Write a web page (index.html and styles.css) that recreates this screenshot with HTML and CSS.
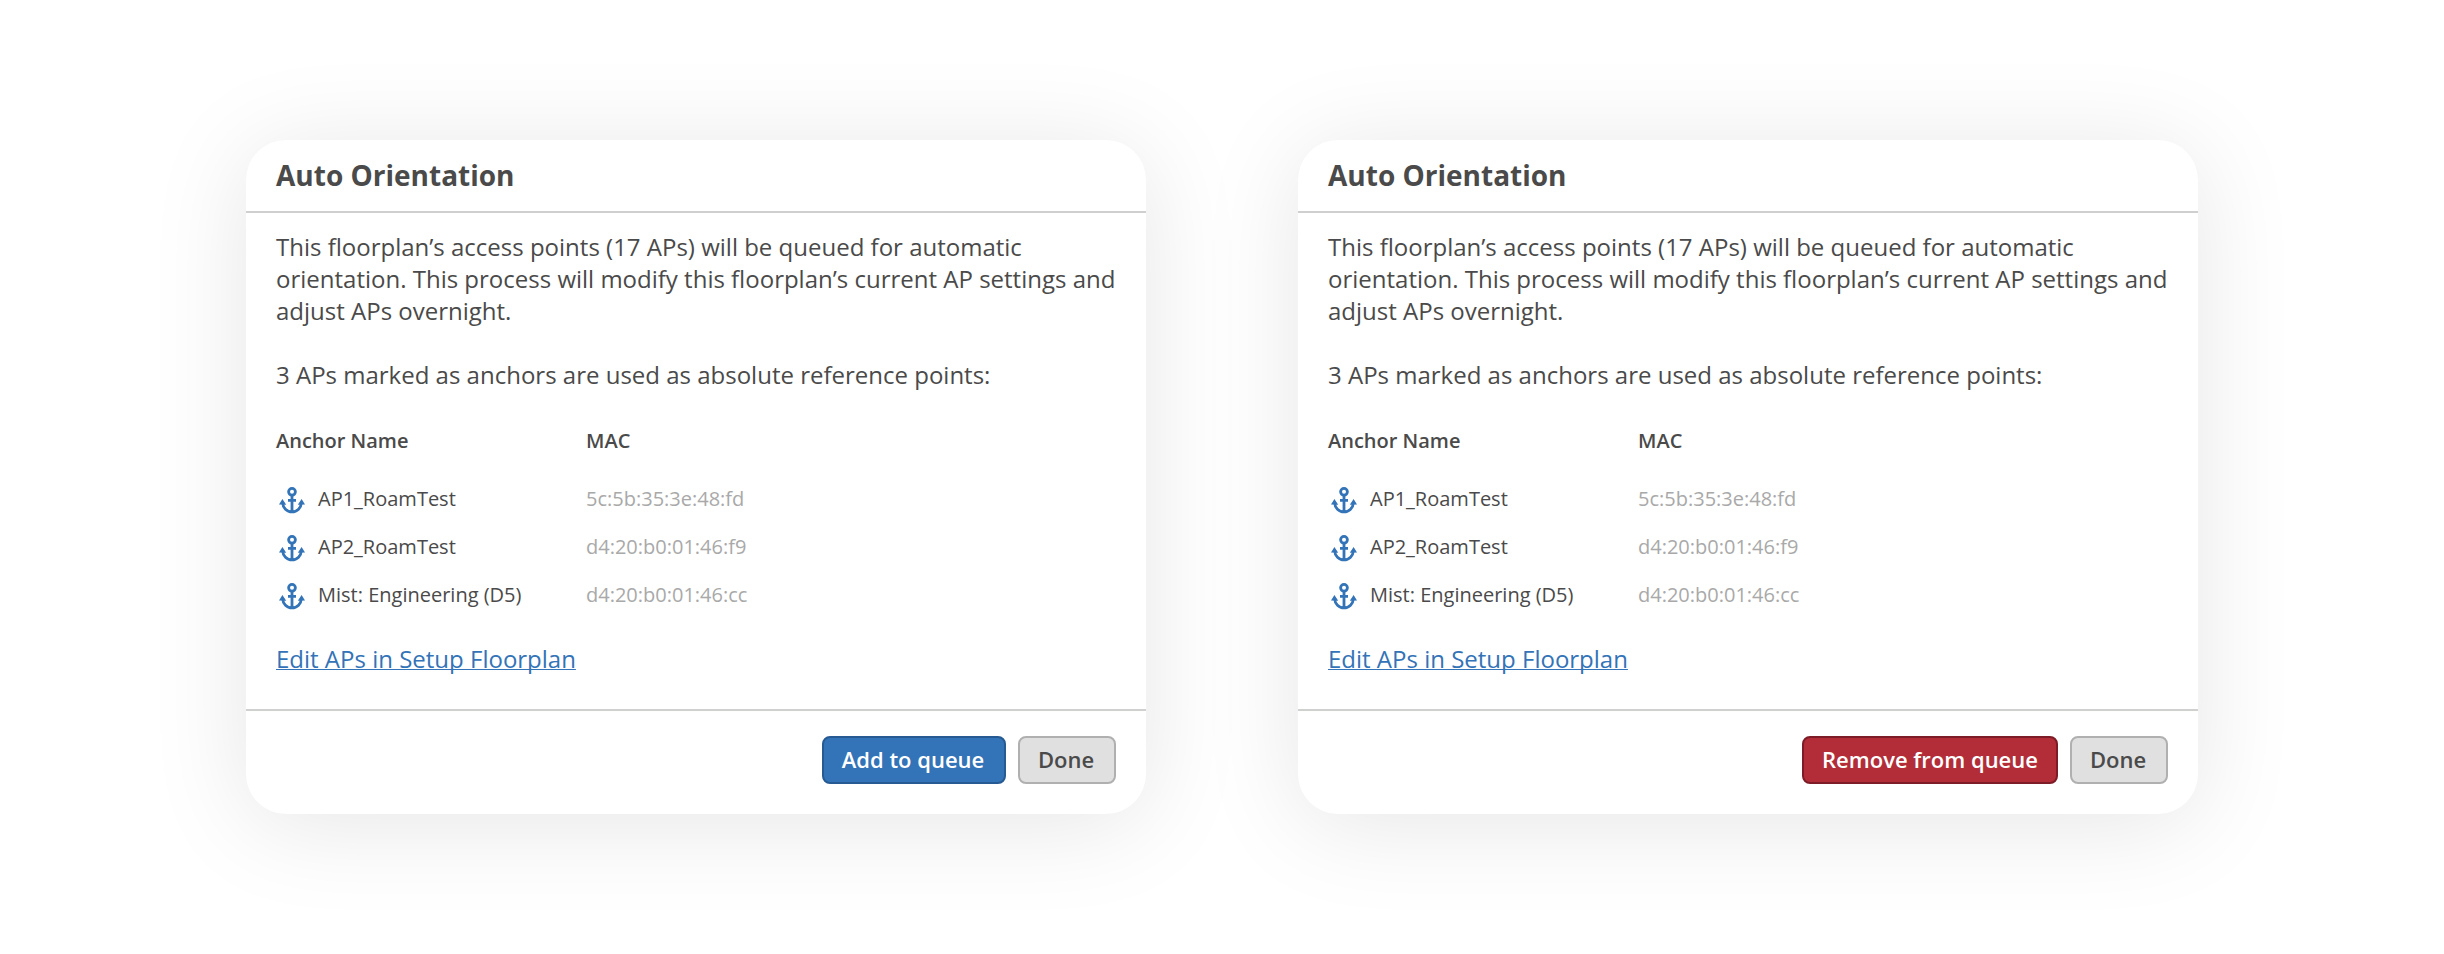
FILE: index.html
```html
<!DOCTYPE html>
<html lang="en">
<head>
<meta charset="utf-8">
<title>Auto Orientation</title>
<link rel="stylesheet" href="styles.css">
</head>
<body>
<svg class="sprite" aria-hidden="true">
  <symbol id="anchor" viewBox="0 0 26 27">
    <circle cx="13" cy="4.8" r="3.4" fill="none" stroke="currentColor" stroke-width="2.8"/>
    <path d="M13 8v17M9 13.300h8M3.600 15.500c.3 5.300 4.200 9.400 9.400 9.400s9.100-4.100 9.400-9.400" fill="none" stroke="currentColor" stroke-width="2.800"/>
    <path d="M3.400 12L7.200 17.800L0 17.400ZM22.600 12L26 17.400L18.800 17.800Z" fill="currentColor"/>
  </symbol>
</svg>
<main class="stage">
  <section class="dialog">
    <header class="dialog-header"><h2 class="title">Auto Orientation</h2></header>
    <div class="dialog-body">
      <p class="text">This floorplan’s access points (17 APs) will be queued for automatic<br>orientation. This process will modify this floorplan’s current AP settings and<br>adjust APs overnight.</p>
      <p class="text">3 APs marked as anchors are used as absolute reference points:</p>
      <div class="table">
        <div class="row head"><span>Anchor Name</span><span>MAC</span></div>
        <div class="row"><span class="name"><svg class="icon"><use href="#anchor"/></svg>AP1_RoamTest</span><span class="mac">5c:5b:35:3e:48:fd</span></div>
        <div class="row"><span class="name"><svg class="icon"><use href="#anchor"/></svg>AP2_RoamTest</span><span class="mac">d4:20:b0:01:46:f9</span></div>
        <div class="row"><span class="name"><svg class="icon"><use href="#anchor"/></svg>Mist: Engineering (D5)</span><span class="mac">d4:20:b0:01:46:cc</span></div>
      </div>
      <a class="link" href="#">Edit APs in Setup Floorplan</a>
    </div>
    <footer class="dialog-footer"><button class="btn primary">Add to queue</button><button class="btn done">Done</button></footer>
  </section>
  <section class="dialog">
    <header class="dialog-header"><h2 class="title">Auto Orientation</h2></header>
    <div class="dialog-body">
      <p class="text">This floorplan’s access points (17 APs) will be queued for automatic<br>orientation. This process will modify this floorplan’s current AP settings and<br>adjust APs overnight.</p>
      <p class="text">3 APs marked as anchors are used as absolute reference points:</p>
      <div class="table">
        <div class="row head"><span>Anchor Name</span><span>MAC</span></div>
        <div class="row"><span class="name"><svg class="icon"><use href="#anchor"/></svg>AP1_RoamTest</span><span class="mac">5c:5b:35:3e:48:fd</span></div>
        <div class="row"><span class="name"><svg class="icon"><use href="#anchor"/></svg>AP2_RoamTest</span><span class="mac">d4:20:b0:01:46:f9</span></div>
        <div class="row"><span class="name"><svg class="icon"><use href="#anchor"/></svg>Mist: Engineering (D5)</span><span class="mac">d4:20:b0:01:46:cc</span></div>
      </div>
      <a class="link" href="#">Edit APs in Setup Floorplan</a>
    </div>
    <footer class="dialog-footer"><button class="btn danger">Remove from queue</button><button class="btn done">Done</button></footer>
  </section>
</main>
</body>
</html>
```
FILE: styles.css
```css
* { box-sizing: border-box; }
body {
  margin: 0;
  background: #fff;
  color: #4a4a4a;
  font-family: "Open Sans", "Noto Sans", sans-serif;
}
.sprite { display: none; }
.stage {
  display: flex;
  justify-content: center;
  align-items: center;
  gap: 152px;
  height: 954px;
}
.dialog {
  display: flex;
  flex-direction: column;
  width: 900px;
  height: 674px;
  border-radius: 40px;
  background: #fff;
  box-shadow: 0 10px 100px rgba(0, 0, 0, 0.1);
}
.dialog-header {
  height: 73px;
  padding: 15px 30px 0;
  border-bottom: 2px solid #cfcfcf;
}
.title { margin: 0; font-size: 28px; line-height: 40px; font-weight: 700; }
.dialog-body {
  flex: 1;
  padding: 18px 30px 0;
}
.text { margin: 0 0 32px; font-size: 24px; line-height: 32px; white-space: nowrap; }
.table { padding-top: 2px; font-size: 20px; line-height: 27px; }
.row {
  display: grid;
  grid-template-columns: 310px 1fr;
  align-items: start;
  height: 48px;
  padding-top: 10px;
}
.head { height: 31px; margin-bottom: 19px; padding-top: 2px; font-weight: 600; }
.name { display: flex; align-items: flex-start; }
.icon { width: 26px; height: 27px; margin: 2px 13px 0 3px; color: #3373b7; }
.mac { color: #a9a9a9; }
.link {
  display: block;
  width: max-content;
  margin-top: 23px;
  color: #3373b7;
  font-size: 24px;
  line-height: 33px;
  text-decoration-thickness: 1px;
  text-underline-offset: 1px;
  text-decoration-skip-ink: none;
}
.dialog-footer {
  display: flex;
  justify-content: flex-end;
  align-items: flex-start;
  gap: 12px;
  height: 105px;
  padding: 25px 30px 0;
  border-top: 2px solid #cfd1cf;
}
.btn {
  height: 48px;
  padding: 0 2px 2px 0;
  border: 2px solid;
  border-radius: 8px;
  font: 600 22px/42px "Open Sans", "Noto Sans", sans-serif;
  white-space: nowrap;
}
.primary { width: 184px; background: #3373b7; border-color: #265a92; color: #fff; }
.danger { width: 256px; padding-right: 0; background: #b22d38; border-color: #7d1c26; color: #fff; }
.done { width: 98px; background: #e0e0e0; border-color: #b0b0b0; color: #4a4a4a; }
```
